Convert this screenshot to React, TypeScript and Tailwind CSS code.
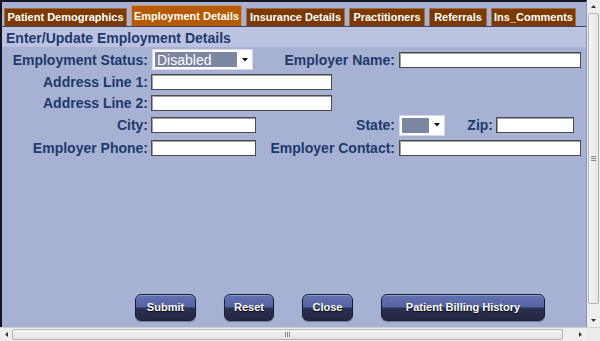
import React from "react";

const labelCls =
  "text-[14px] font-bold text-[#1d3a6c] leading-none whitespace-nowrap text-right";
const inputCls =
  "h-[16px] bg-white border border-[#4a4a4a] shadow-[inset_1px_1px_0_#a0a0a0] outline-none";

function Tab({ label, active, w }: { label: string; active?: boolean; w: number }) {
  return (
    <div
      style={{ width: w }}
      className={
        active
          ? "h-[21px] bg-[#b55a00] border border-[#d9925a] border-b-0 text-white text-[11px] font-bold flex items-center justify-center leading-none"
          : "h-[18px] bg-[#7c3a02] border border-[#a0704a] border-b-0 text-white text-[11px] font-bold flex items-center justify-center leading-none"
      }
    >
      {label}
    </div>
  );
}

function Select({ text, w, innerW }: { text?: string; w: number; innerW: number }) {
  return (
    <div
      style={{ width: w }}
      className="h-[21px] bg-white border border-[#d8d8e8] flex items-center pl-[2px]"
    >
      <div
        style={{ width: innerW }}
        className="h-[15px] bg-[#7b86a1] text-white text-[14px] leading-none flex items-center pl-[2px] font-['Liberation_Sans',sans-serif]"
      >
        {text}
      </div>
      <div className="flex-1 flex justify-center items-center">
        <svg width="6" height="4" viewBox="0 0 6 4">
          <path d="M0 0 L6 0 L3 3.5 Z" fill="#111" />
        </svg>
      </div>
    </div>
  );
}

function Btn({ label, w }: { label: string; w: number }) {
  return (
    <div
      style={{ width: w }}
      className="h-[27px] rounded-[6px] border border-[#1b1f36] bg-[linear-gradient(to_bottom,#6372b2_0%,#5462a1_48%,#2b3152_52%,#22273f_100%)] shadow-[inset_0_1px_0_#8b99d2,0_1px_1px_rgba(0,0,0,0.3)] text-white text-[11px] font-bold flex items-center justify-center [text-shadow:0_1px_1px_#000]"
    >
      {label}
    </div>
  );
}

export default function App() {
  return (
    <div className="w-[600px] h-[341px] flex flex-col overflow-hidden bg-[#f0f0f0] font-['Liberation_Sans',Arial,sans-serif]">
      <div className="flex flex-1 min-h-0">
        {/* content */}
        <div className="flex-1 flex flex-col border-t-[2px] border-l-[2px] border-[#15151f] bg-[#a6b1d3] border-r border-r-[#8a93b0]">
          {/* tabs */}
          <div className="h-[25px] flex items-end gap-[4px] pl-[2px] border-b border-[#3c4462]">
            <Tab label="Patient Demographics" w={123} />
            <Tab label="Employment Details" active w={111} />
            <Tab label="Insurance Details" w={99} />
            <Tab label="Practitioners" w={76} />
            <Tab label="Referrals" w={58} />
            <Tab label="Ins_Comments" w={85} />
          </div>
          {/* header */}
          <div className="h-[20px] bg-[#bcc3e1] flex items-center pl-[4px] pt-[1px] text-[14px] font-bold text-[#1d3a6c] leading-none">
            Enter/Update Employment Details
          </div>
          {/* form */}
          <div className="flex flex-col">
            <div className="h-[25px] flex items-center">
              <div className={labelCls + " w-[146px]"}>Employment Status:</div>
              <div className="ml-[4px]">
                <Select text="Disabled" w={101} innerW={82} />
              </div>
              <div className={labelCls + " w-[142px]"}>Employer Name:</div>
              <input readOnly className={inputCls + " ml-[4px] w-[182px]"} />
            </div>
            <div className="h-[20px] flex items-center">
              <div className={labelCls + " w-[146px]"}>Address Line 1:</div>
              <input readOnly className={inputCls + " ml-[3px] w-[181px]"} />
            </div>
            <div className="h-[20px] mt-[1px] flex items-center">
              <div className={labelCls + " w-[146px]"}>Address Line 2:</div>
              <input readOnly className={inputCls + " ml-[3px] w-[181px]"} />
            </div>
            <div className="h-[24px] flex items-center">
              <div className={labelCls + " w-[146px]"}>City:</div>
              <input readOnly className={inputCls + " ml-[3px] w-[105px]"} />
              <div className={labelCls + " w-[139px]"}>State:</div>
              <div className="ml-[4px]">
                <Select w={46} innerW={27} />
              </div>
              <div className={labelCls + " w-[48px]"}>Zip:</div>
              <input readOnly className={inputCls + " ml-[3px] w-[78px]"} />
            </div>
            <div className="h-[20px] mt-[1px] flex items-center">
              <div className={labelCls + " w-[146px]"}>Employer Phone:</div>
              <input readOnly className={inputCls + " ml-[3px] w-[105px]"} />
              <div className={labelCls + " w-[139px]"}>Employer Contact:</div>
              <input readOnly className={inputCls + " ml-[4px] w-[182px]"} />
            </div>
          </div>
          {/* buttons */}
          <div className="mt-auto mb-[6px] flex items-center gap-[28px] pl-[133px]">
            <Btn label="Submit" w={61} />
            <Btn label="Reset" w={50} />
            <Btn label="Close" w={51} />
            <Btn label="Patient Billing History" w={164} />
          </div>
        </div>
        {/* vertical scrollbar */}
        <div className="w-[13px] flex flex-col bg-[#eeeeee]">
          <div className="h-[13px] flex items-center justify-center">
            <svg width="5" height="3" viewBox="0 0 5 3">
              <path d="M0 3 L5 3 L2.5 0 Z" fill="#333" />
            </svg>
          </div>
          <div className="flex-1 mx-[1px] rounded-[2px] border border-[#b4b4b4] bg-[linear-gradient(to_right,#f6f6f6,#e4e4e4)] flex flex-col items-center justify-center gap-[1px]">
            <div className="w-[5px] h-px bg-[#888]" />
            <div className="w-[5px] h-px bg-[#888]" />
            <div className="w-[5px] h-px bg-[#888]" />
          </div>
          <div className="h-[13px] mt-[10px] flex items-center justify-center">
            <svg width="5" height="3" viewBox="0 0 5 3">
              <path d="M0 0 L5 0 L2.5 3 Z" fill="#333" />
            </svg>
          </div>
        </div>
      </div>
      {/* horizontal scrollbar */}
      <div className="h-[14px] flex">
        <div className="flex-1 flex bg-[#eeeeee] border-t border-[#d0d0d0]">
          <div className="w-[12px] flex items-center justify-center">
            <svg width="3" height="5" viewBox="0 0 3 5">
              <path d="M3 0 L3 5 L0 2.5 Z" fill="#333" />
            </svg>
          </div>
          <div className="w-[551px] my-[1px] rounded-[2px] border border-[#b4b4b4] bg-[linear-gradient(to_bottom,#f6f6f6,#e2e2e2)] flex items-center justify-center gap-[1px]">
            <div className="h-[5px] w-px bg-[#888]" />
            <div className="h-[5px] w-px bg-[#888]" />
            <div className="h-[5px] w-px bg-[#888]" />
          </div>
          <div className="flex-1" />
          <div className="w-[13px] flex items-center justify-center">
            <svg width="3" height="5" viewBox="0 0 3 5">
              <path d="M0 0 L0 5 L3 2.5 Z" fill="#333" />
            </svg>
          </div>
        </div>
        <div className="w-[13px] bg-[#ececec] border-t border-[#d0d0d0]" />
      </div>
    </div>
  );
}
